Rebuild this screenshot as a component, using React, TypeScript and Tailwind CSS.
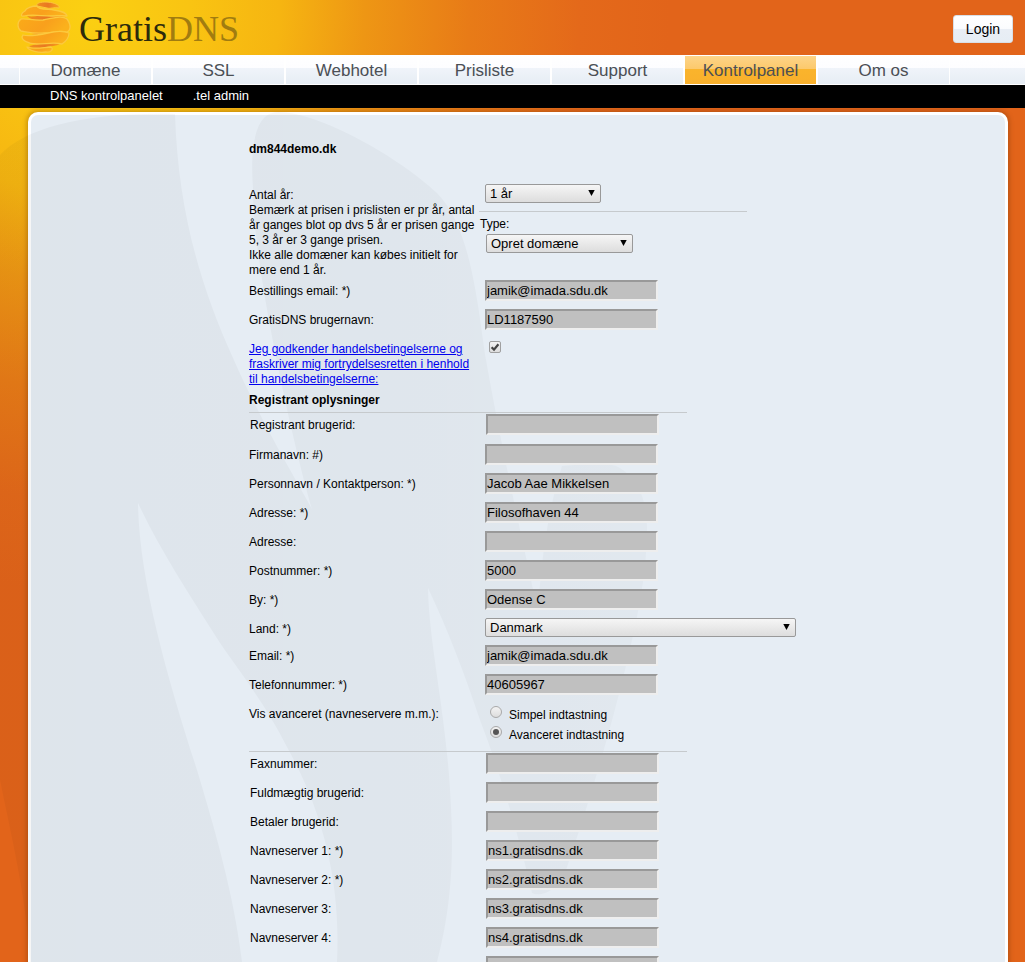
import React, { useId } from "react";

const tabs = ["Domæne", "SSL", "Webhotel", "Prisliste", "Support", "Kontrolpanel", "Om os"];

function Logo() {
  return (
    <a href="#" className="flex items-center gap-1 no-underline" aria-label="GratisDNS">
      <svg width="58" height="55" viewBox="0 0 58 55" aria-hidden="true">
        <defs>
          <linearGradient id="ribbon" x1="0" y1="0" x2="1" y2="0.3">
            <stop offset="0" stopColor="#fbab18" />
            <stop offset="0.6" stopColor="#f9a01c" />
            <stop offset="1" stopColor="#fbb11c" />
          </linearGradient>
          <linearGradient id="fold" x1="0" y1="0" x2="1" y2="0">
            <stop offset="0" stopColor="#f08c1e" />
            <stop offset="0.5" stopColor="#e97822" />
            <stop offset="1" stopColor="#f8a01c" />
          </linearGradient>
        </defs>
        <g strokeLinejoin="round">
          <g fill="url(#fold)">
            <path d="M20 6 C18 2 29 1 36 3 C40 4 43 6 42 8 C36 7 34 9 30 8 Z" stroke="#fcc63c" />
            <path d="M10 16 C18 18 28 13 38 16 C44 16 48 16 49 18 C40 17 33 22 25 21 C17 20 13 19 10 16 Z" />
            <path d="M14 34 C28 32 34 23 50 26 C50 31 37 32 29 34 C24 35 19 35 14 34 Z" />
            <path d="M12 46 C21 44 31 40 44 43 C40 47 30 46 24 48 C18 49 15 48 12 46 Z" />
          </g>
          <g fill="url(#ribbon)" stroke="#fcc93e" strokeWidth="1.3">
            <path d="M8 11 C9 8 15 6 20 6 C21 10 31 9 37 10 C44 11 49 12 50 16 C44 15 40 16 34 16 C25 16 14 14 7 16 C3 17 4 13 8 11 Z" />
            <path d="M4 19 C9 18 17 21 26 20 C37 18 45 15 50 19 C55 26 53 31 50 32 C43 30 36 33 27 33 C18 34 10 32 4 31 C0 28 0 22 4 19 Z" />
            <path d="M6 35 C12 37 22 35 31 33 C39 31 47 31 52 33 C52 38 48 42 45 44 C37 42 29 44 20 44 C12 44 2 40 6 35 Z" />
            <path d="M10 47 C18 50 28 47 34 47 C37 49 34 53 29 52 C22 53 12 51 10 47 Z" />
          </g>
        </g>
      </svg>
      <span className="pt-[2px] font-['Liberation_Serif',serif] text-[36px] leading-[40px] text-[#2c2a0c]">
        Gratis<span className="text-[#a17c10]">DNS</span>
      </span>
    </a>
  );
}

function Leaves() {
  return (
    <svg
      className="pointer-events-none absolute -left-[31px] -top-[7px]"
      width="700"
      height="854"
      viewBox="0 108 700 854"
      aria-hidden="true"
    >
      <defs>
        <linearGradient id="leaf" gradientUnits="userSpaceOnUse" x1="0" y1="0" x2="650" y2="0">
          <stop offset="0" stopColor="#000" stopOpacity="0.036" />
          <stop offset="0.6" stopColor="#000" stopOpacity="0.03" />
          <stop offset="1" stopColor="#000" stopOpacity="0.022" />
        </linearGradient>
      </defs>
      <path
        fill="url(#leaf)"
        d="M0 155 C25 128 85 112 175 114 C178 210 200 285 233 358 C258 415 288 466 312 509 C292 440 252 260 253 188 C251 160 251 112 278 112 C320 112 400 158 437 193 C472 228 478 310 486 360 C500 440 520 530 538 612 C541 560 548 510 562 466 C585 464 605 463 616 466 C636 476 647 495 647 530 C647 575 636 625 625 670 C608 740 586 812 566 870 C558 892 540 897 532 893 C522 850 505 785 480 720 C465 675 448 630 428 588 C429 640 443 700 449 775 C453 830 456 890 437 962 L337 962 C341 880 322 810 287 747 C262 697 230 660 213 632 C188 592 160 550 138 503 C139 580 168 680 197 770 C215 830 234 895 242 962 L30 962 C27 900 10 830 0 780 Z"
      />
    </svg>
  );
}

function Row({
  label,
  htmlFor,
  children,
  className = "",
}: {
  label: React.ReactNode;
  htmlFor?: string;
  children: React.ReactNode;
  className?: string;
}) {
  return (
    <div className={`flex items-start ${className}`}>
      <div className="w-[236px] shrink-0 pt-1">
        {htmlFor ? (
          <label htmlFor={htmlFor} className="block w-[232px]">
            {label}
          </label>
        ) : (
          <div className="w-[232px]">{label}</div>
        )}
      </div>
      <div className="min-w-0">{children}</div>
    </div>
  );
}

function Field({ label, value = "", type = "text" }: { label: string; value?: string; type?: string }) {
  const id = useId();
  return (
    <Row label={label} htmlFor={id} className="pb-2">
      <input
        id={id}
        type={type}
        defaultValue={value}
        className="block h-[21px] w-[173px] border-2 border-b-[#eeeeee] border-l-[#999999] border-r-[#eeeeee] border-t-[#999999] bg-[#c0c0c0] text-[13px] leading-[17px] text-black outline-none"
      />
    </Row>
  );
}

function Select({ id, options, className }: { id: string; options: string[]; className: string }) {
  return (
    <div className={`relative ${className}`}>
      <select
        id={id}
        className="block h-[19px] w-full appearance-none rounded-[2px] border border-[#999999] bg-gradient-to-b from-[#f6f6f6] to-[#dddddd] pl-1 pr-5 text-[13px] leading-[17px] text-black outline-none"
      >
        {options.map((o) => (
          <option key={o}>{o}</option>
        ))}
      </select>
      <svg
        className="pointer-events-none absolute right-[6px] top-[6px]"
        width="7"
        height="6"
        viewBox="0 0 7 6"
        aria-hidden="true"
      >
        <path d="M0.3 0H6.7L3.5 6Z" fill="#000" />
      </svg>
    </div>
  );
}

function Radio({ label, checked = false }: { label: string; checked?: boolean }) {
  return (
    <label className="flex h-5 items-start gap-[7px] pl-[5px]">
      <span className="relative mt-[3px] block h-3 w-3">
        <input
          type="radio"
          name="visning"
          defaultChecked={checked}
          className="peer block h-3 w-3 appearance-none rounded-full border border-[#a9a9a9] bg-gradient-to-b from-[#f3f3f3] to-[#dddddd]"
        />
        <span className="pointer-events-none absolute left-[3px] top-[3px] hidden h-[6px] w-[6px] rounded-full bg-[#555555] peer-checked:block" />
      </span>
      <span className="pt-[5px]">{label}</span>
    </label>
  );
}

export default function App() {
  return (
    <div className="h-screen overflow-y-auto bg-[#e2641a] bg-[radial-gradient(circle_at_90px_10px,#fbd012_0px,#f9c412_100px,#f6b511_190px,#ee9614_275px,#e87b17_380px,#e4691a_490px,#e2641a_580px)] font-['Liberation_Sans',Arial,sans-serif] text-[12px] leading-[15px] text-black [scrollbar-width:none]">
      <header>
        <div className="flex h-[55px] items-center justify-between pl-[17px] pr-3">
          <Logo />
          <button
            type="button"
            className="mt-[2px] h-7 w-[60px] rounded-[3px] border border-[#d9dfe6] bg-[linear-gradient(#ffffff_0%,#fbfcfe_48%,#e9eef5_52%,#e6edf4_100%)] text-[14px] leading-5"
          >
            Login
          </button>
        </div>
        <nav
          aria-label="Hovedmenu"
          className="flex h-[30px] border-b border-white bg-[linear-gradient(#ffffff_0px,#fdfdff_13px,#f0f4fa_13px,#e6edf4_29px)] pl-[19px]"
        >
          {tabs.map((t) => (
            <a
              key={t}
              href="#"
              className={
                t === "Kontrolpanel"
                  ? "flex w-[133px] justify-center border-x border-t border-white bg-[linear-gradient(#fdd488_0px,#fcc96c_13px,#fab42c_13px,#f9b02c_28px)] pt-1 text-[17px] leading-[22px] text-[#4b4f55]"
                  : "flex w-[133px] justify-center border-x border-t border-white pt-1 text-[17px] leading-[22px] text-[#4b4f55]"
              }
            >
              {t}
            </a>
          ))}
        </nav>
        <nav aria-label="Undermenu" className="flex h-[23px] gap-[30px] bg-black pl-[50px] pt-[2px] text-[13px] leading-[18px] text-white">
          <a href="#">DNS kontrolpanelet</a>
          <a href="#">.tel admin</a>
        </nav>
      </header>

      <main className="relative z-0 ml-7 mr-[17px] mt-1 rounded-t-[10px] border-[3px] border-b-0 border-white bg-[#e6edf4] shadow-[0_0_5px_1px_rgba(90,40,0,0.35)]">
        <Leaves />
        <form className="relative ml-[218px] pb-10 pt-[27px]">
          <h1 className="mb-[27px] text-[12px] font-bold leading-[15px]">dm844demo.dk</h1>

          <Row
            className="pb-[2px]"
            label={
              <>
                <label htmlFor="years">Antal år:</label>
                <p>
                  Bemærk at prisen i prislisten er pr år, antal år ganges blot op dvs 5 år er prisen gange 5, 3 år er 3
                  gange prisen.
                </p>
                <p>Ikke alle domæner kan købes initielt for mere end 1 år.</p>
              </>
            }
          >
            <Select id="years" options={["1 år", "2 år", "3 år", "5 år"]} className="w-[116px]" />
            <div className="-ml-[6px] mt-2 w-[268px] border-t border-[#c6cacd] pl-px pt-[5px]">
              <label htmlFor="type" className="block">
                Type:
              </label>
              <Select id="type" options={["Opret domæne", "Flyt domæne"]} className="ml-[6px] mt-[2px] w-[147px]" />
            </div>
          </Row>

          <Field label="Bestillings email: *)" value="jamik@imada.sdu.dk" />
          <Field label="GratisDNS brugernavn:" value="LD1187590" />
          <Row
            className="pb-[2px]"
            label={
              <a href="#" className="text-[#0000ee] underline">
                Jeg godkender handelsbetingelserne og fraskriver mig fortrydelsesretten i henhold til
                handelsbetingelserne:
              </a>
            }
          >
            <span className="relative ml-1 mt-[3px] block h-3 w-3">
              <input
                type="checkbox"
                defaultChecked
                aria-label="Jeg godkender handelsbetingelserne"
                className="peer block h-3 w-3 appearance-none rounded-[2px] border border-[#a0a0a0] bg-gradient-to-b from-[#f3f3f3] to-[#dddddd]"
              />
              <svg
                className="pointer-events-none absolute left-0 top-0 hidden peer-checked:block"
                width="12"
                height="12"
                viewBox="0 0 12 12"
                aria-hidden="true"
              >
                <path d="M2.6 6.2L5 8.6L9.4 3.2" fill="none" stroke="#444" strokeWidth="2.2" />
              </svg>
            </span>
          </Row>

          <h2 className="w-[438px] border-b border-[#c6cacd] pb-1 pt-1 text-[12px] font-bold leading-[15px]">
            Registrant oplysninger
          </h2>
          <div className="pb-px pl-px pt-px">
            <Field label="Registrant brugerid:" />
          </div>
          <Field label="Firmanavn: #)" />
          <Field label="Personnavn / Kontaktperson: *)" value="Jacob Aae Mikkelsen" />
          <Field label="Adresse: *)" value="Filosofhaven 44" />
          <Field label="Adresse:" />
          <Field label="Postnummer: *)" value="5000" />
          <Field label="By: *)" value="Odense C" />
          <Row label="Land: *)" htmlFor="country" className="pb-2">
            <Select id="country" options={["Danmark", "Norge", "Sverige"]} className="w-[311px]" />
          </Row>
          <Field label="Email: *)" value="jamik@imada.sdu.dk" />
          <Field label="Telefonnummer: *)" value="40605967" />
          <Row label="Vis avanceret (navneservere m.m.):" className="pb-2">
            <Radio label="Simpel indtastning" />
            <Radio label="Avanceret indtastning" checked />
          </Row>
          <div className="w-[438px] border-t border-[#c6cacd]" />
          <div className="pl-px pt-px">
            <Field label="Faxnummer:" />
            <Field label="Fuldmægtig brugerid:" />
            <Field label="Betaler brugerid:" />
            <Field label="Navneserver 1: *)" value="ns1.gratisdns.dk" />
            <Field label="Navneserver 2: *)" value="ns2.gratisdns.dk" />
            <Field label="Navneserver 3:" value="ns3.gratisdns.dk" />
            <Field label="Navneserver 4:" value="ns4.gratisdns.dk" />
            <Field label="Navneserver 5:" value="ns5.gratisdns.dk" />
          </div>
        </form>
      </main>
    </div>
  );
}
